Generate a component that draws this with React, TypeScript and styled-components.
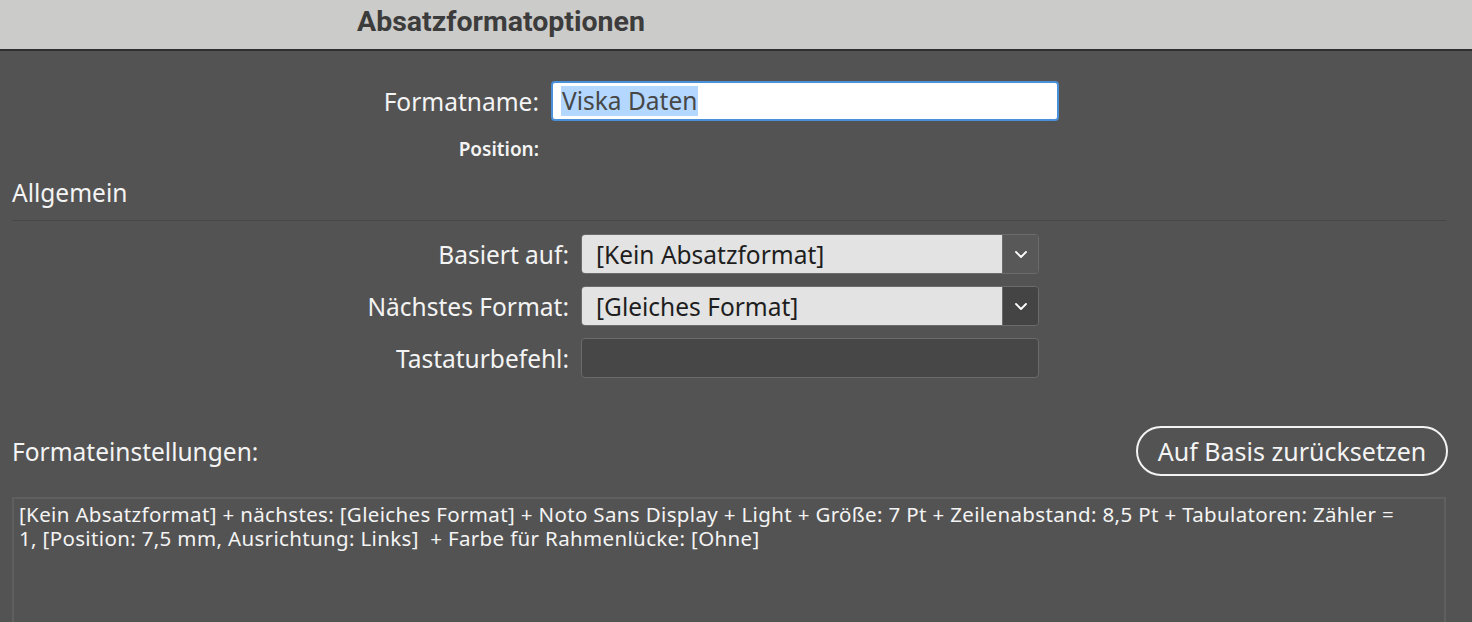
import styled, { createGlobalStyle } from 'styled-components'

const GlobalStyle = createGlobalStyle`
  html, body {
    margin: 0;
    padding: 0;
    background: #535353;
    overflow: hidden;
  }
  body {
    font-family: "Noto Sans", "Open Sans", sans-serif;
    color: #f2f2f2;
  }
  * {
    box-sizing: border-box;
  }
`

const Window = styled.div`
  width: 1472px;
  height: 622px;
  display: flex;
  flex-direction: column;
  background: #535353;
  overflow: hidden;
`

const TitleBar = styled.div`
  flex-shrink: 0;
  height: 51px;
  background: #cbcbc9;
  border-bottom: 2px solid #2f2f2f;
  display: flex;
  align-items: center;
  padding-left: 357px;
`

const Title = styled.h1`
  margin: -6px 0 0;
  font-family: Roboto, "Liberation Sans", sans-serif;
  font-weight: 700;
  font-size: 28.5px;
  line-height: 32px;
  color: #3c3c3c;
`

const Body = styled.div`
  flex-shrink: 0;
  padding: 0 26px 0 12px;
  display: flex;
  flex-direction: column;
`

const FieldRow = styled.div<{ $labelWidth: number; $top: number }>`
  display: grid;
  grid-template-columns: ${p => p.$labelWidth}px 1fr;
  column-gap: 12px;
  align-items: center;
  margin-top: ${p => p.$top}px;
`

const Label = styled.label<{ $size?: number; $bold?: boolean }>`
  text-align: right;
  font-size: ${p => p.$size ?? 24.5}px;
  line-height: ${p => Math.round((p.$size ?? 24.5) * 1.2)}px;
  font-weight: ${p => (p.$bold ? 600 : 400)};
  white-space: nowrap;
  color: #f4f4f4;
`

const NameInput = styled.div`
  width: 508px;
  height: 40px;
  background: #ffffff;
  border: 2px solid #4a90d9;
  border-radius: 4px;
  display: flex;
  align-items: center;
  padding-left: 8px;
`

const Selected = styled.span`
  background: #b3d7ff;
  color: #474747;
  font-size: 24.5px;
  line-height: 30px;
  padding: 0 1px;
`

const SectionTitle = styled.div<{ $top: number }>`
  font-size: 24.5px;
  line-height: 29px;
  margin-top: ${p => p.$top}px;
  color: #f4f4f4;
`

const Separator = styled.div`
  height: 1px;
  background: #474747;
  margin-top: 13px;
`

const Select = styled.div`
  width: 458px;
  height: 40px;
  border: 1px solid #6b6b6b;
  border-radius: 4px;
  display: flex;
  overflow: hidden;
`

const SelectValue = styled.div`
  flex: 1;
  background: #e3e3e3;
  color: #1e1e1e;
  font-size: 24.5px;
  display: flex;
  align-items: center;
  padding-left: 14px;
`

const SelectArrow = styled.div<{ $focused?: boolean }>`
  width: 36px;
  background: ${p => (p.$focused ? '#444444' : '#585858')};
  border-left: 1px solid #6b6b6b;
  display: flex;
  align-items: center;
  justify-content: center;
`

const ShortcutInput = styled.div`
  width: 458px;
  height: 40px;
  border: 1px solid #6b6b6b;
  border-radius: 4px;
  background: #474747;
`

const SettingsHeader = styled.div`
  display: flex;
  align-items: center;
  justify-content: space-between;
  margin-top: 48px;
`

const ResetButton = styled.button`
  height: 50px;
  width: 312px;
  border: 2px solid #f4f4f4;
  border-radius: 25px;
  background: transparent;
  color: #f4f4f4;
  font-family: "Noto Sans", "Open Sans", sans-serif;
  font-size: 25px;
  padding: 0;
  margin-right: -2px;
`

const SettingsBox = styled.div`
  margin-top: 21px;
  height: 140px;
  border: 2px solid #5f5f5f;
  border-bottom: none;
  padding: 4px 5px;
  font-size: 20.5px;
  letter-spacing: 0.35px;
  line-height: 23.5px;
  color: #f4f4f4;
  white-space: nowrap;
`

const Chevron = () => (
  <svg width="14" height="9" viewBox="0 0 14 9" fill="none">
    <path d="M2 2l5 5 5-5" stroke="#ffffff" strokeWidth="1.8" strokeLinecap="round" strokeLinejoin="round" />
  </svg>
)

export default function App() {
  return (
    <Window>
      <GlobalStyle />
      <TitleBar>
        <Title>Absatzformatoptionen</Title>
      </TitleBar>
      <Body>
        <FieldRow $labelWidth={527} $top={30}>
          <Label>Formatname:</Label>
          <NameInput>
            <Selected>Viska Daten</Selected>
          </NameInput>
        </FieldRow>
        <FieldRow $labelWidth={527} $top={17}>
          <Label $size={19} $bold>Position:</Label>
        </FieldRow>
        <SectionTitle $top={17}>Allgemein</SectionTitle>
        <Separator />
        <FieldRow $labelWidth={557} $top={13}>
          <Label>Basiert auf:</Label>
          <Select>
            <SelectValue>[Kein Absatzformat]</SelectValue>
            <SelectArrow>
              <Chevron />
            </SelectArrow>
          </Select>
        </FieldRow>
        <FieldRow $labelWidth={557} $top={12}>
          <Label>Nächstes Format:</Label>
          <Select>
            <SelectValue>[Gleiches Format]</SelectValue>
            <SelectArrow $focused>
              <Chevron />
            </SelectArrow>
          </Select>
        </FieldRow>
        <FieldRow $labelWidth={557} $top={12}>
          <Label>Tastaturbefehl:</Label>
          <ShortcutInput />
        </FieldRow>
        <SettingsHeader>
          <SectionTitle $top={0}>Formateinstellungen:</SectionTitle>
          <ResetButton>Auf Basis zurücksetzen</ResetButton>
        </SettingsHeader>
        <SettingsBox>
          [Kein Absatzformat] + nächstes: [Gleiches Format] + Noto Sans Display + Light + Größe: 7 Pt + Zeilenabstand: 8,5 Pt + Tabulatoren: Zähler =
          <br />
          1, [Position: 7,5 mm, Ausrichtung: Links]&nbsp; + Farbe für Rahmenlücke: [Ohne]
        </SettingsBox>
      </Body>
    </Window>
  )
}
